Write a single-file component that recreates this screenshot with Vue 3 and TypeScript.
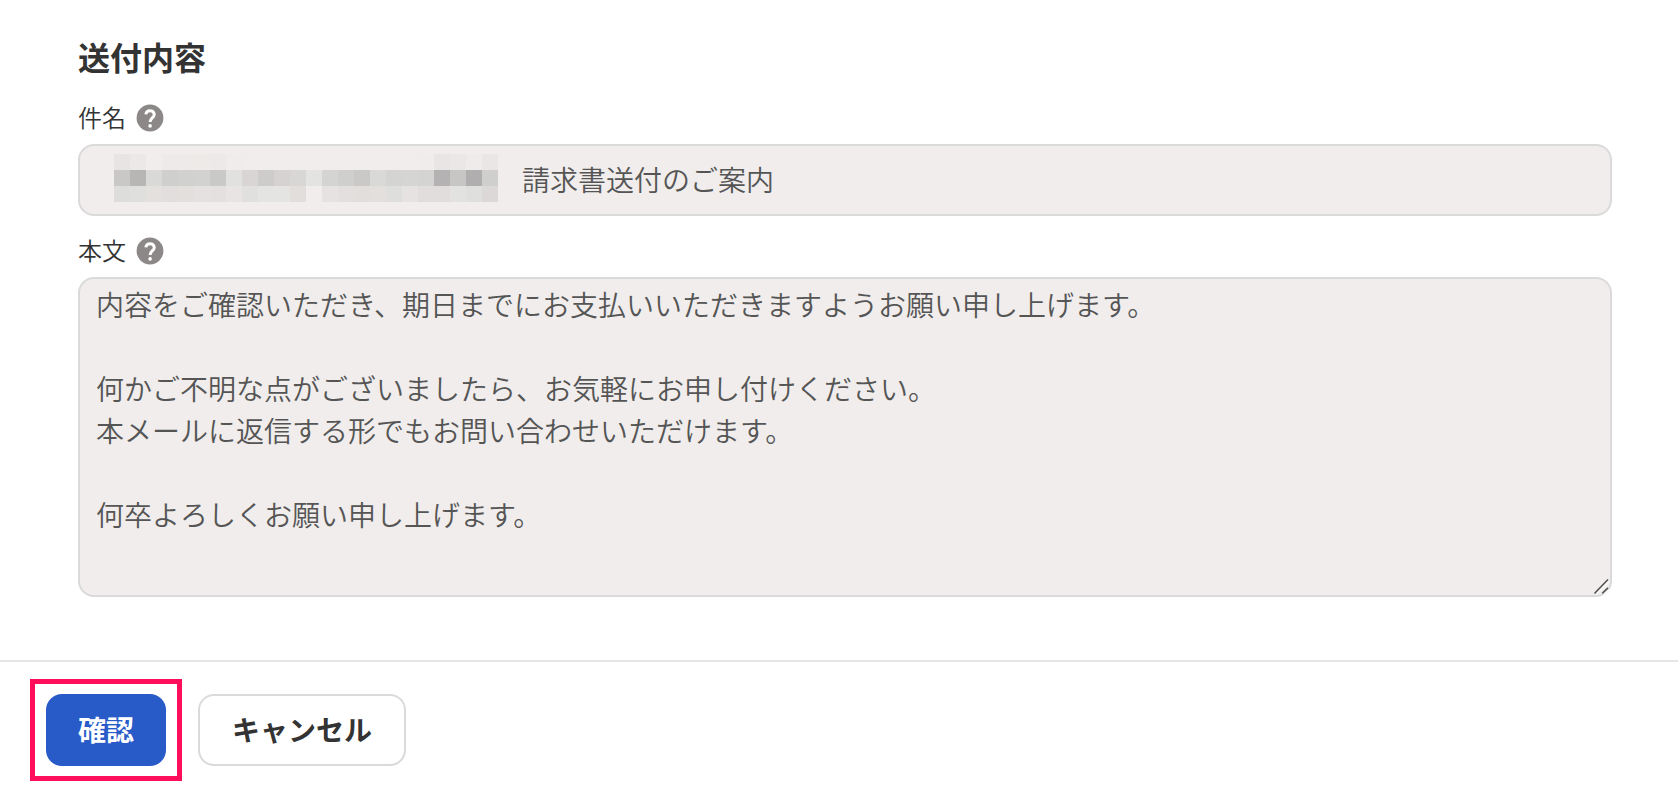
<script setup lang="ts">
import { ref } from 'vue'

const subject = ref('請求書送付のご案内')
const body = ref(
  [
    '内容をご確認いただき、期日までにお支払いいただきますようお願い申し上げます。',
    '',
    '何かご不明な点がございましたら、お気軽にお申し付けください。',
    '本メールに返信する形でもお問い合わせいただけます。',
    '',
    '何卒よろしくお願い申し上げます。',
  ].join('\n'),
)

const helpPath = 'M11.8 12.4a4.3 4.3 0 0 1 8.5 0c0 3.1-4.2 3.4-4.2 7.6'

// Colours of the mosaic that hides the company name, row by row.
const mosaic: string[][] = [
  'e7e4e3 ebe8e7 f0edec edeae9 edeae9 edeae8 ece9e8 efeceb f0edec f0edec f0edec f0edec f0edec f0edec f0edec f0edec f0edec f0edec f0edec efeceb e8e5e4 ebe7e6 eeebea e9e6e5',
  'c9c8c6 b7b6b4 d9d9d7 cfcfcd d1d1cf d2d2d0 c9c9c7 e1e1df d9d5d4 cdccca d6d2d1 d8d7d5 e3e3e1 d4d4d2 cfcfcd cac9c7 d9d9d7 d4d4d2 d5d5d3 d4d4d2 b4b2b3 c7c6c4 b0aeaf cfcfcd',
  'dddddb dfdfdd e3e0de e2dedd e2dfdd e4e1e0 e3e0df e7e4e3 e0e0de e4e4e2 e4e4e2 e1dedc f0edec e5e2e1 e2dfde e1dedc e2dfdd dededc e5e2e1 e1dddc e0dddc e2e2e0 dfdfdd dcd8d7',
].map((row) => row.split(' ').map((c) => `#${c}`))
</script>

<template>
  <form class="page" @submit.prevent>
    <section class="content">
      <h2 class="title">送付内容</h2>

      <div class="field">
        <div class="label-row">
          <label for="subject">件名</label>
          <button type="button" class="help" aria-label="件名のヘルプ">
            <svg viewBox="0 0 32 32" aria-hidden="true">
              <circle class="disc" cx="16" cy="16" r="13.4" />
              <path :d="helpPath" />
              <circle class="dot" cx="16.1" cy="23.9" r="1.8" />
            </svg>
          </button>
        </div>
        <div class="box subject-box">
          <svg class="mosaic" viewBox="0 0 24 3" shape-rendering="crispEdges" aria-hidden="true">
            <g v-for="(row, y) in mosaic" :key="y">
              <rect v-for="(c, x) in row" :key="x" :x="x" :y="y" width="1" height="1" :fill="c" />
            </g>
          </svg>
          <input id="subject" v-model="subject" type="text" readonly />
        </div>
      </div>

      <div class="field">
        <div class="label-row">
          <label for="body">本文</label>
          <button type="button" class="help" aria-label="本文のヘルプ">
            <svg viewBox="0 0 32 32" aria-hidden="true">
              <circle class="disc" cx="16" cy="16" r="13.4" />
              <path :d="helpPath" />
              <circle class="dot" cx="16.1" cy="23.9" r="1.8" />
            </svg>
          </button>
        </div>
        <div class="body-wrap">
          <textarea id="body" v-model="body" class="box" readonly></textarea>
          <svg class="grip" viewBox="0 0 18 18" aria-hidden="true">
            <path class="grip-halo" d="M3.5 17.5L17 4M11.5 17.5L17 12" />
            <path class="grip-line" d="M2.5 16.5L16 2.5M10.3 16.3L16 10.8" />
          </svg>
        </div>
      </div>
    </section>

    <footer class="actions">
      <div class="highlight">
        <button type="submit" class="btn primary">確認</button>
      </div>
      <button type="button" class="btn secondary">キャンセル</button>
    </footer>
  </form>
</template>

<style>
body {
  margin: 0;
  background: #fff;
}
</style>

<style scoped>
.page,
.page button,
.page input,
.page textarea {
  font-family: 'Noto Sans CJK JP', sans-serif;
}

.page {
  color: #333;
}

.content {
  padding: 32px 66px 63px 78px;
}

.title {
  margin: 0 0 20px;
  font-size: 32px;
  line-height: 48px;
  font-weight: 700;
}

.field + .field {
  margin-top: 17px;
}

.label-row {
  display: flex;
  align-items: center;
  gap: 8px;
  margin-bottom: 8px;
  height: 36px;
  font-size: 24px;
  line-height: 34px;
  font-weight: 350;
}

.label-row label {
  padding-bottom: 2px;
}

.help {
  display: block;
  width: 32px;
  height: 32px;
  padding: 0;
  border: 0;
  background: none;
}

.help svg {
  display: block;
  width: 32px;
  height: 32px;
  fill: none;
  stroke: #fff;
  stroke-width: 2.9;
}

.help .disc {
  fill: #8c8888;
  stroke: none;
}

.help .dot {
  fill: #fff;
  stroke: none;
}

.box {
  box-sizing: border-box;
  width: 100%;
  border: 2px solid #dadada;
  border-radius: 16px;
  background: #f0edec;
}

.subject-box {
  display: flex;
  align-items: flex-start;
  gap: 24px;
  height: 72px;
  padding: 8px 16px 0 34px;
}

.mosaic {
  flex: none;
  width: 384px;
  height: 48px;
}

input,
textarea {
  font-size: 28px;
  line-height: 42px;
  font-weight: 350;
  color: #555;
  outline: 0;
}

input {
  flex: 1;
  min-width: 0;
  height: 50px;
  padding: 0;
  border: 0;
  background: none;
}

.body-wrap {
  position: relative;
}

textarea {
  display: block;
  height: 320px;
  margin: 0;
  padding: 4px 16px;
  resize: none;
  overflow: auto;
}

.grip {
  position: absolute;
  right: 2px;
  bottom: 2px;
  width: 18px;
  height: 18px;
  fill: none;
}

.grip-halo {
  stroke: #fafafa;
  stroke-width: 2;
}

.grip-line {
  stroke: #555;
  stroke-width: 1.7;
}

.actions {
  display: flex;
  gap: 32px;
  padding: 32px 46px 24px;
  border-top: 2px solid #e6e6e6;
}

.highlight {
  position: relative;
}

.highlight::after {
  content: '';
  position: absolute;
  inset: -15px -16px;
  border: 5px solid #ff0f5b;
  pointer-events: none;
}

.btn {
  display: block;
  height: 72px;
  padding: 0 32px 2px;
  border: 0;
  border-radius: 16px;
  font-size: 28px;
  line-height: 42px;
  font-weight: 700;
}

.primary {
  background: #285ac8;
  color: #fff;
}

.secondary {
  border: 2px solid #dadada;
  background: #fff;
  color: #333;
}
</style>
